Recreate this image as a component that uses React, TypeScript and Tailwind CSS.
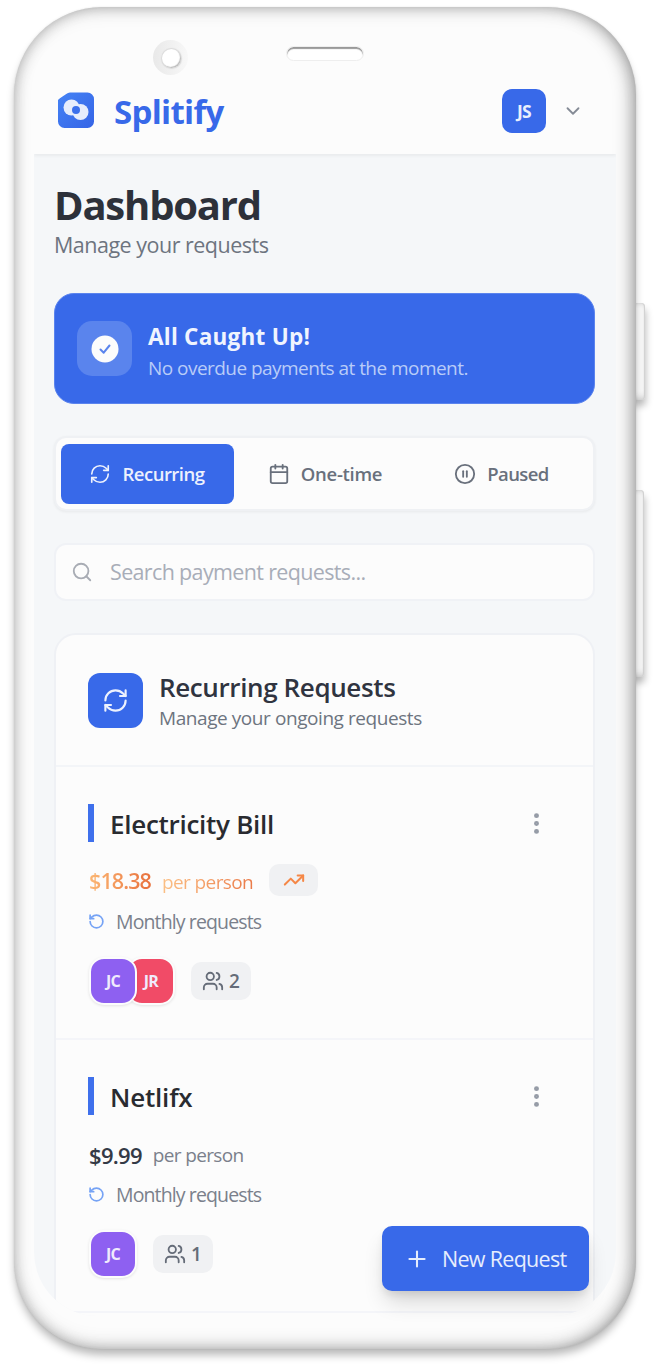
import React from 'react';
import {
  Calendar,
  ChevronDown,
  CirclePause,
  EllipsisVertical,
  Plus,
  RefreshCw,
  RotateCcw,
  Search,
  TrendingUp,
  Users,
} from 'lucide-react';

function Logo() {
  return (
    <svg width="36" height="36" viewBox="0 0 36 36" className="mb-[1px] block">
      <defs>
        <linearGradient id="logo-bg" x1="0" y1="0" x2="1" y2="1">
          <stop offset="0" stopColor="#4583f5" />
          <stop offset="1" stopColor="#3564e6" />
        </linearGradient>
      </defs>
      <path
        d="M12 0.5H29.500a6.500 6.500 0 0 1 6.500 6.500V29.500a6.500 6.500 0 0 1-6.500 6.500H6.500a6.500 6.500 0 0 1-6.500-6.500V8Q1 6.500 6 3.500Q10 0.500 12 0.500Z"
        fill="url(#logo-bg)"
      />
      <circle cx="13.500" cy="15.500" r="8" fill="#e6edfc" />
      <circle cx="22.500" cy="20" r="8" fill="#e6edfc" />
      <circle cx="18" cy="18" r="4" fill="#3b70ec" />
    </svg>
  );
}

function CheckBadge() {
  return (
    <svg width="28" height="28" viewBox="0 0 28 28" fill="none">
      <circle cx="14" cy="14" r="13.500" fill="#fcfcfc" />
      <path d="M9.500 14.500L12.700 17.700L18.500 10.500" stroke="#5a84ed" strokeWidth="2" strokeLinecap="round" strokeLinejoin="round" />
    </svg>
  );
}

function Avatar({ initials, className }: { initials: string; className: string }) {
  return (
    <div className={`flex h-[48px] w-[48px] items-center justify-center rounded-[15px] border-2 border-[#fcfcfc] text-[16px] font-bold text-[#f0ebfd] shadow-[0_1px_3px_rgba(0,0,0,0.1)] ${className}`}>
      <span className="tracking-[-0.800px]">{initials}</span>
    </div>
  );
}

interface RequestProps {
  title: string;
  titleClass: string;
  price: string;
  rising?: boolean;
  count: number;
  children: React.ReactNode;
}

function RequestItem({ title, titleClass, price, rising, count, children }: RequestProps) {
  return (
    <article className="h-[273px] border-b-2 border-[#f4f5f9] pt-[37px] pr-[43px] pl-[32px]">
      <div className="flex h-[38px] items-center">
        <div className="h-[38px] w-[6px] bg-[#3f70ec]" />
        <h3 className={`ml-4 flex-1 pt-[2px] text-[26px] leading-[34px] font-semibold text-[#292b30] ${titleClass}`}>{title}</h3>
        <EllipsisVertical size={27} strokeWidth={2.400} className="text-[#959ba6]" />
      </div>
      <div className="mt-[22px] flex h-8 items-center pl-[1px]">
        <span
          className={
            rising
              ? 'bg-gradient-to-r from-[#fbb774] to-[#e8713d] bg-clip-text pt-[2px] text-[21.500px] leading-8 font-semibold tracking-[-0.900px] text-transparent'
              : 'pt-[3px] text-[22px] leading-8 font-semibold tracking-[-0.700px] text-[#343a46]'
          }
        >
          {price}
        </span>
        <span
          className={
            rising
              ? 'ml-[11px] bg-gradient-to-r from-[#fbc085] to-[#ea7a48] bg-clip-text pt-[3px] text-[19px] leading-8 tracking-[-0.600px] text-transparent'
              : 'ml-[11px] pt-[4px] text-[19px] leading-8 tracking-[-0.650px] text-[#7a808b]'
          }
        >
          per person
        </span>
        {rising && (
          <div className="ml-[16px] flex h-8 w-[49px] items-center justify-center rounded-[10px] bg-[#f0f1f3]">
            <TrendingUp size={22} strokeWidth={2.200} className="text-[#f58746]" />
          </div>
        )}
      </div>
      <div className="mt-[11px] flex h-7 items-center">
        <RotateCcw size={17} strokeWidth={2.400} className="text-[#76a3f5]" />
        <span className="ml-[11px] pt-[1px] text-[19.500px] leading-7 tracking-[-0.880px] text-[#7a808b]">Monthly requests</span>
      </div>
      <div className="mt-[22px] ml-[1px] flex h-[48px] items-center">
        {children}
        <div className="ml-[16px] flex h-[38px] items-center rounded-[10px] bg-[#f0f1f3] px-[11px] text-[#656c78]">
          <Users size={22} strokeWidth={2} />
          <span className="ml-[5px] text-[19px] leading-7 font-semibold">{count}</span>
        </div>
      </div>
    </article>
  );
}

function Tab({ icon, label, active, className }: { icon: React.ReactNode; label: string; active?: boolean; className: string }) {
  return (
    <div
      className={`flex h-[60px] items-center justify-center gap-[11px] rounded-[8px] pr-[1px] text-[18.500px] font-semibold ${className} ${
        active ? 'bg-[#3869e9] text-[#edf1fd]' : 'text-[#69707c]'
      }`}
    >
      {icon}
      <span className="pt-[1px]">{label}</span>
    </div>
  );
}

export default function App() {
  return (
    <div className="relative h-[1370px] w-[656px] overflow-hidden bg-white pt-[7px] pl-[14px] font-['Open_Sans','Noto_Sans',sans-serif]">
      <div className="absolute top-[303px] left-[632px] h-[97px] w-[13px] rounded-[4px] bg-[#fafafa] shadow-[inset_-1px_0_1px_#d0d0d0,inset_0_-4px_6px_-2px_#cfcfcf,inset_0_3px_4px_-2px_#ddd,1px_6px_7px_rgba(0,0,0,0.25)]" />
      <div className="absolute top-[490px] left-[632px] h-[187px] w-[12px] rounded-[4px] bg-[#fafafa] shadow-[inset_-1px_0_1px_#d0d0d0,inset_0_-4px_6px_-2px_#cfcfcf,inset_0_3px_4px_-2px_#ddd,1px_6px_7px_rgba(0,0,0,0.25)]" />

      <div className="relative h-[1342px] w-[622px] rounded-[88px] bg-[#fcfcfc] px-[20px] pt-[20px] shadow-[inset_7px_0_16px_-6px_rgba(0,0,0,0.22),inset_-9px_0_18px_-5px_rgba(0,0,0,0.34),inset_0_10px_20px_-8px_rgba(0,0,0,0.13),inset_0_-10px_20px_-8px_rgba(0,0,0,0.15),0_7px_9px_-1px_rgba(0,0,0,0.28),0_0_2px_rgba(0,0,0,0.1)]">
        <div className="absolute top-[33px] left-[139px] flex h-[35px] w-[35px] items-center justify-center rounded-full bg-gradient-to-r from-[#e9e9e9] to-[#f8f8f8] pt-[1px] pl-[1px]">
          <div className="h-[19px] w-[19px] rounded-full bg-white shadow-[inset_-1px_-1px_1px_#bbb,0_0_1px_1px_#dadada]" />
        </div>
        <div className="absolute top-[39px] left-[272px] h-[15px] w-[78px] rounded-full border border-[#eeeeee] bg-white shadow-[inset_0_2px_1px_#999]" />

        <div className="flex h-[1289px] w-[582px] flex-col overflow-hidden rounded-b-[64px]">
          <header className="z-10 flex h-[127px] shrink-0 items-center pt-[40px] pr-[32px] pl-[24px] shadow-[0_2px_3px_rgba(0,0,0,0.05)]">
            <Logo />
            <span className="ml-[20px] pt-[2px] text-[33px] leading-[44px] font-bold tracking-[-0.700px] text-[#3869e9]">Splitify</span>
            <div className="ml-auto flex h-11 w-11 items-center justify-center rounded-[10px] bg-[#3869e9] pt-[1px] text-[17.500px] font-bold tracking-[-0.600px] text-[#e9effd]">JS</div>
            <ChevronDown size={22} strokeWidth={2} className="ml-[16px] text-[#858b96]" />
          </header>

          <main className="flex flex-1 flex-col bg-[#f5f7f9] pt-[27px] pr-[21px] pl-[20px]">
            <h1 className="h-[50px] text-[40px] leading-[48px] font-bold tracking-[-1.200px] whitespace-nowrap text-[#2d313a]">Dashboard</h1>
            <p className="h-7 text-[21.500px] leading-7 tracking-[-0.500px] whitespace-nowrap text-[#6d747f]">Manage your requests</p>

            <section className="mt-[34px] flex h-[111px] shrink-0 items-center rounded-[20px] border border-[#5b84ee] bg-[#3869e9] px-[22px]">
              <div className="flex h-[55px] w-[55px] items-center justify-center rounded-[15px] bg-[#5a84ed]">
                <CheckBadge />
              </div>
              <div className="ml-4 pt-[7px] whitespace-nowrap">
                <h2 className="text-[22.500px] leading-8 font-bold tracking-[0.250px] text-[#f0f4fe]">All Caught Up!</h2>
                <p className="text-[19px] leading-[30px] tracking-[-0.540px] text-[#b9ccf8]">No overdue payments at the moment.</p>
              </div>
            </section>

            <nav className="mt-[32px] flex h-[75px] shrink-0 items-center rounded-[12px] border-2 border-[#eff1f4] bg-[#fcfcfc] px-[5px] shadow-[0_1px_3px_rgba(0,0,0,0.06)]">
              <Tab active className="w-[173px] tracking-[-0.500px]" icon={<RefreshCw size={22} strokeWidth={1.800} />} label="Recurring" />
              <Tab className="w-[183px] tracking-[-0.300px]" icon={<Calendar size={22} strokeWidth={2} />} label="One-time" />
              <Tab className="w-[170px] tracking-[-0.600px]" icon={<CirclePause size={22} strokeWidth={2} />} label="Paused" />
            </nav>

            <div className="mt-[32px] flex h-[58px] shrink-0 items-center rounded-[12px] border-2 border-[#f0f2f6] bg-[#fcfcfc] pl-[15px]">
              <Search size={22} strokeWidth={2} className="text-[#a8acb4]" />
              <span className="ml-[17px] text-[21.500px] leading-8 tracking-[-0.650px] text-[#a8adb8]">Search payment requests...</span>
            </div>

            <section className="mt-[32px] h-[690px] shrink-0 rounded-[22px] border-2 border-[#eff1f5] bg-[#fcfcfc]">
              <div className="flex h-[132px] items-center border-b-2 border-[#f3f5f8] px-[32px]">
                <div className="flex h-[55px] w-[55px] items-center justify-center rounded-[12px] bg-[#3869e9] text-[#edf2fe]">
                  <RefreshCw size={27} strokeWidth={1.900} />
                </div>
                <div className="ml-[16px] pt-[3px] whitespace-nowrap">
                  <h2 className="text-[26px] leading-[32px] font-semibold tracking-[-0.380px] text-[#303440]">Recurring Requests</h2>
                  <p className="text-[19px] leading-[30px] tracking-[-0.430px] text-[#6d747f]">Manage your ongoing requests</p>
                </div>
              </div>
              <RequestItem title="Electricity Bill" titleClass="tracking-[-0.280px]" price="$18.38" rising count={2}>
                <Avatar initials="JC" className="z-10 bg-[#8e60f1]" />
                <Avatar initials="JR" className="-ml-[10px] bg-[#f14b67]" />
              </RequestItem>
              <RequestItem title="Netlifx" titleClass="tracking-[-0.200px]" price="$9.99" count={1}>
                <Avatar initials="JC" className="bg-[#8e60f1]" />
              </RequestItem>
            </section>
          </main>
        </div>

        <button className="absolute top-[1219px] left-[368px] flex h-[65px] w-[207px] items-center rounded-[10px] bg-[#3869e9] pl-[22px] whitespace-nowrap text-[#e6edfd] shadow-[0_14px_22px_-4px_rgba(0,0,0,0.16),0_5px_8px_-2px_rgba(0,0,0,0.1)]">
          <Plus size={26} strokeWidth={1.900} />
          <span className="ml-[12px] text-[21.500px] leading-8 font-medium tracking-[-0.700px]">New Request</span>
        </button>
      </div>
    </div>
  );
}
